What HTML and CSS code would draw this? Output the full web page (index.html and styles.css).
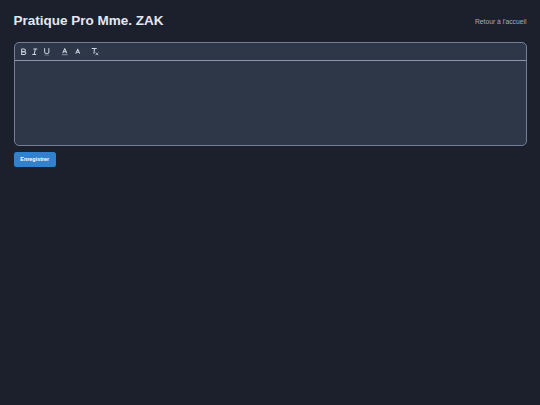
FILE: index.html
```html
<!DOCTYPE html>
<html lang="fr">
<head>
<meta charset="utf-8">
<title>Pratique Pro Mme. ZAK</title>
<link rel="stylesheet" href="styles.css">
</head>
<body>
<main class="page">
  <header class="top">
    <h1 class="title">Pratique Pro Mme. ZAK</h1>
    <a class="back" href="#">Retour à l'accueil</a>
  </header>
  <section class="editor">
    <div class="toolbar">
      <div class="group">
        <button class="tool" type="button" aria-label="Gras">
          <svg class="icon" viewBox="0 0 18 18"><path d="M5 4h4.500A2.500 2.500 0 0 1 12 6.500 2.500 2.500 0 0 1 9.500 9H5Z"/><path d="M5 9h5.500a2.500 2.500 0 0 1 0 5H5Z"/></svg>
        </button>
        <button class="tool" type="button" aria-label="Italique">
          <svg class="icon" viewBox="0 0 18 18"><path d="M7 4h6M5 14h6M8 14l2-10"/></svg>
        </button>
        <button class="tool" type="button" aria-label="Souligné">
          <svg class="icon" viewBox="0 0 18 18"><path d="M5 3v6a4 4 0 0 0 4 4 4 4 0 0 0 4-4V3"/><path class="faint" d="M5 15.500h8"/></svg>
        </button>
      </div>
      <div class="group colors">
        <button class="tool" type="button" aria-label="Couleur du texte">
          <svg class="icon" viewBox="0 0 18 18"><path d="M5.500 11 9 3l3.500 8M6.400 9h5.200"/><path class="bar" d="M4.500 14.500h9"/></svg>
        </button>
        <button class="tool" type="button" aria-label="Couleur de fond">
          <svg class="icon" viewBox="0 0 18 18"><path d="M5.500 12 9 4l3.500 8M6.400 10h5.200"/></svg>
        </button>
      </div>
      <div class="group clean">
        <button class="tool" type="button" aria-label="Effacer la mise en forme">
          <svg class="icon" viewBox="0 0 18 18"><path d="M4 3h8M8.500 3 7.500 12"/><path class="mark" d="m11 11 4 4M15 11l-4 4"/></svg>
        </button>
      </div>
    </div>
    <div class="content"></div>
  </section>
  <button class="save" type="button">Enregistrer</button>
</main>
</body>
</html>
```
FILE: styles.css
```css
* { box-sizing: border-box; }
html, body { margin: 0; height: 100%; }
body {
  background: #1c202c;
  color: #e2e8f0;
  font-family: "Liberation Sans", Arial, sans-serif;
}
.page { padding: 13px 13.5px; }
.top {
  display: flex;
  justify-content: space-between;
  align-items: center;
  height: 16px;
  margin-bottom: 13px;
}
.title { margin: 0; font-size: 13.5px; line-height: 16px; font-weight: 700; color: #e2e8f0; }
.back { font-size: 6.75px; color: #a0aec0; text-decoration: none; }
.editor {
  height: 104px;
  display: flex;
  flex-direction: column;
  background: #2d3748;
  border: 1px solid #718096;
  border-radius: 5px;
  overflow: hidden;
}
.toolbar {
  display: flex;
  align-items: center;
  gap: 7px;
  height: 17.5px;
  flex: none;
  padding-left: 3.5px;
  border-bottom: 1px solid #8a97ab;
}
.group { display: flex; gap: 0.5px; }
.colors { gap: 2px; margin-right: -1px; }
.tool {
  display: flex;
  align-items: center;
  justify-content: center;
  width: 11px;
  height: 11px;
  padding: 0;
  border: 0;
  background: none;
}
.icon {
  display: block;
  width: 9.5px;
  height: 9.5px;
  fill: none;
  stroke: #cbd5e0;
  stroke-width: 1.9;
  stroke-linecap: round;
  stroke-linejoin: round;
}
.faint { stroke: #718096; stroke-width: 1.2; }
.bar { stroke: #718096; stroke-width: 2.4; }
.mark { stroke: #cbd5e0; stroke-width: 1.5; }
.content { flex: 1; }
.save {
  display: block;
  width: 42.5px;
  height: 15px;
  margin-top: 6px;
  padding: 0;
  border: 0;
  border-radius: 2.5px;
  background: #3182ce;
  color: #ffffff;
  font: 700 5.4px/15px "Liberation Sans", Arial, sans-serif;
}
```
